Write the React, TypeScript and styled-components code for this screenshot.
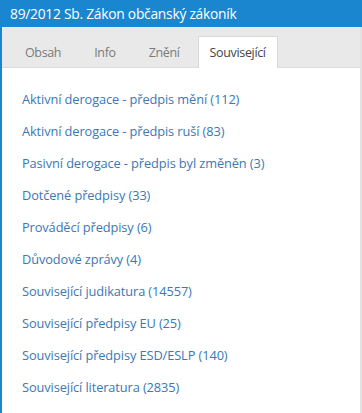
import React, { useState } from 'react'
import styled, { createGlobalStyle } from 'styled-components'

const GlobalStyle = createGlobalStyle`
  html, body {
    margin: 0;
    padding: 0;
    background: #ffffff;
  }
  body {
    font-family: "Open Sans", "Noto Sans", sans-serif;
  }
`

const Panel = styled.div`
  width: 362px;
  height: 413px;
  display: flex;
  flex-direction: column;
  overflow: hidden;
  box-sizing: border-box;
`

const Header = styled.div`
  height: 27px;
  background: #1a86cf;
  color: #ffffff;
  font-size: 13.8px;
  line-height: 27px;
  padding-left: 10px;
  flex-shrink: 0;
  letter-spacing: -0.25px;
`

const Body = styled.div`
  flex: 1;
  display: flex;
  flex-direction: column;
  border-left: 2px solid #1a86cf;
  border-right: 2px solid #e2e2e2;
`

const TabBar = styled.div`
  height: 41px;
  background: #e9e9e9;
  display: flex;
  align-items: flex-end;
  gap: 3px;
  padding-left: 8px;
  box-sizing: border-box;
  border-bottom: 1px solid #dcdcdc;
  flex-shrink: 0;
`

const Tab = styled.div<{ $active?: boolean }>`
  height: 32px;
  box-sizing: border-box;
  padding: 0 ${p => (p.$active ? 11 : 14)}px;
  margin-bottom: -1px;
  display: flex;
  align-items: center;
  font-size: 12.5px;
  color: ${p => (p.$active ? '#444444' : '#7a7a7a')};
  background: ${p => (p.$active ? '#ffffff' : 'transparent')};
  border: 1px solid ${p => (p.$active ? '#d8d8d8' : 'transparent')};
  border-bottom: none;
  cursor: pointer;
  letter-spacing: -0.35px;
`

const List = styled.ul`
  list-style: none;
  margin: 0;
  padding: 15px 0 0 20px;
  display: flex;
  flex-direction: column;
`

const Item = styled.li`
  height: 32px;
  display: flex;
  align-items: center;
`

const Link = styled.a`
  color: #3a78b6;
  font-size: 12.8px;
  text-decoration: none;
  letter-spacing: -0.1px;
  cursor: pointer;
`

const tabs = ['Obsah', 'Info', 'Znění', 'Související']

const links = [
  'Aktivní derogace - předpis mění (112)',
  'Aktivní derogace - předpis ruší (83)',
  'Pasivní derogace - předpis byl změněn (3)',
  'Dotčené předpisy (33)',
  'Prováděcí předpisy (6)',
  'Důvodové zprávy (4)',
  'Související judikatura (14557)',
  'Související předpisy EU (25)',
  'Související předpisy ESD/ESLP (140)',
  'Související literatura (2835)',
]

const App: React.FC = () => {
  const [active, setActive] = useState(3)

  return (
    <>
      <GlobalStyle />
      <Panel>
        <Header>89/2012 Sb. Zákon občanský zákoník</Header>
        <Body>
          <TabBar>
            {tabs.map((t, i) => (
              <Tab key={t} $active={i === active} onClick={() => setActive(i)}>
                {t}
              </Tab>
            ))}
          </TabBar>
          <List>
            {links.map(l => (
              <Item key={l}>
                <Link>{l}</Link>
              </Item>
            ))}
          </List>
        </Body>
      </Panel>
    </>
  )
}

export default App
